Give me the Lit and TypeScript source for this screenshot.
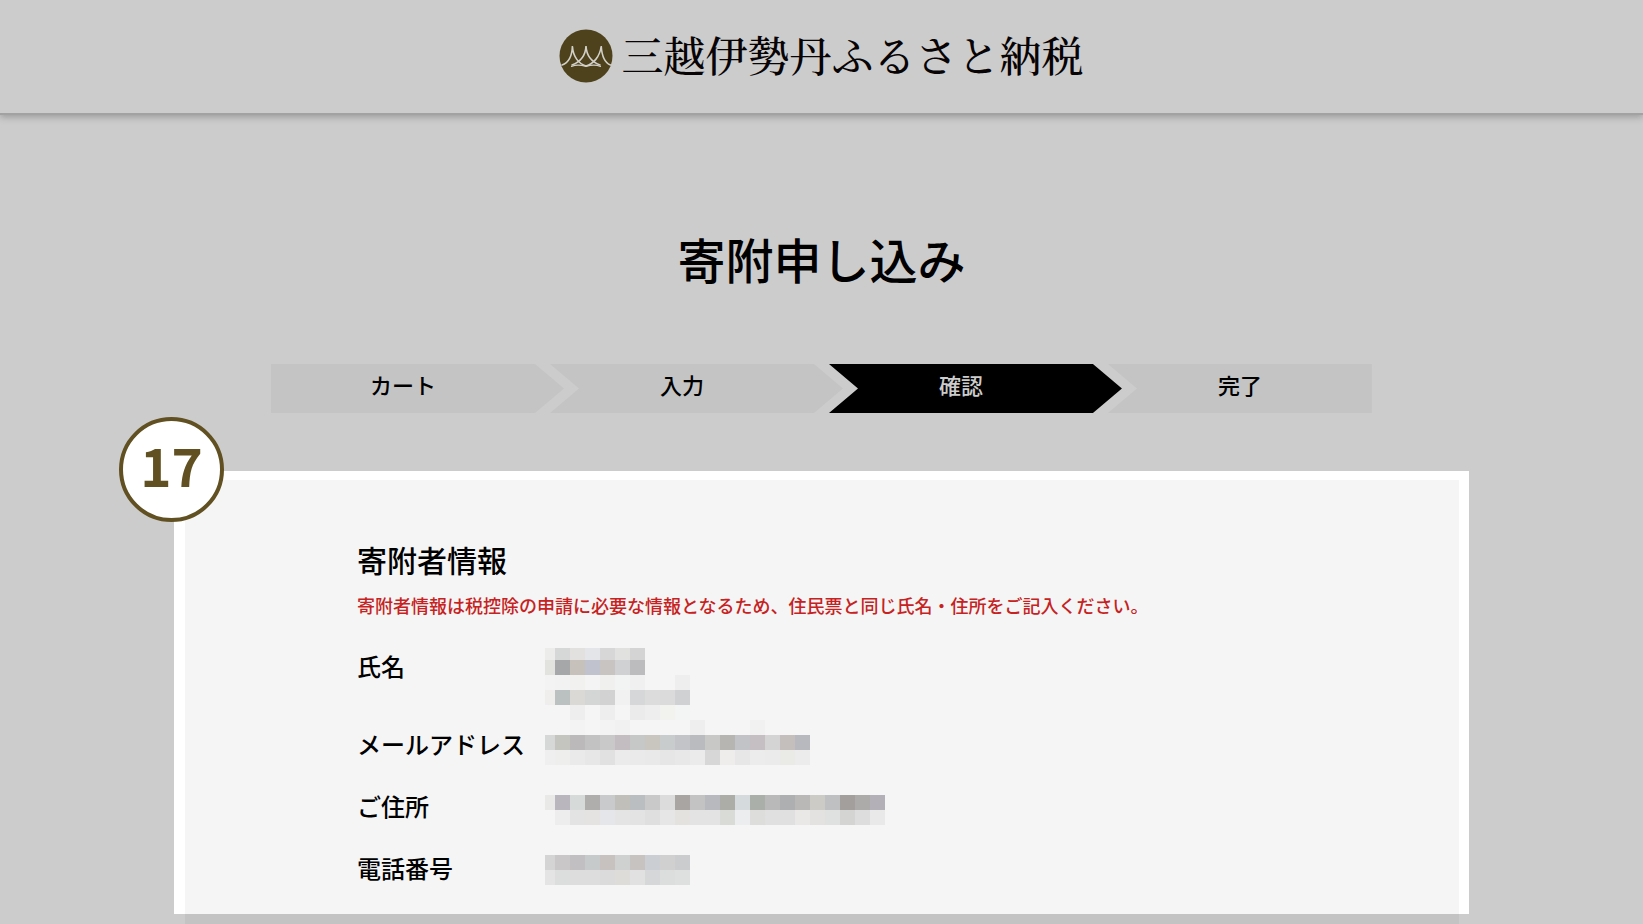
import { LitElement, html, svg, css } from "lit";
import { customElement } from "lit/decorators.js";
import { classMap } from "lit/directives/class-map.js";

const STEPS = ["カート", "入力", "確認", "完了"];
const CURRENT = 2;

const FIELDS = ["氏名", "メールアドレス", "ご住所", "電話番号"];

// Masked values: each band is one line of cells, "-" leaves a cell empty.
const BANDS: { y: number; h: number; cells: string }[] = [
  { y: 0, h: 12, cells: "ececea d6d7d7 e3e1df e3e5e8 d7d7d7 e1e1df d4d4d4" },
  { y: 12, h: 15, cells: "e2e2de a5a7a9 c6c2bb c0c3ce c7c4c1 cfd1d3 bcbcbe" },
  { y: 27, h: 15, cells: "f3f3f3 f2f2f2 f1f1f0 f4f4f4 f0f0ee f1f4f3 f0f0f0 - - eeeeee" },
  { y: 42, h: 15, cells: "efeeec bbc0c1 dbd9d6 d4d6d5 d2d2d2 f1f1f1 d5d7d9 dcdcdc dbdbdb cfd1d3" },
  { y: 57, h: 15, cells: "- - eeeeee - eeeeee - ebebeb eeeeee f2f2ef f2f5f4" },
  { y: 72, h: 15, cells: "- - f3f3f3 - f3f3f3 f1f1f1 - - - - eeeeee - - - f1f1f1" },
  { y: 87, h: 15, cells: "d5d8d7 c5c5bf bbb9b9 c2c2c2 c9c9c9 c3bdc1 c6c8c7 c9c5bf c8cccd c2c4c7 babbbe c8c8c6 b6b5b2 c1c3c7 c5bfc3 d4d4d4 c4bebc b8b9bf" },
  { y: 102, h: 15, cells: "efefef eeeeec eaeaea e7e7e7 e1e1e1 ebebeb eaeaea e9e9e9 e6e6e6 e8e8e8 ebebeb d7d7d7 eeedeb e7e7e7 ececec ebebeb eaeae7 ececec" },
  { y: 147, h: 15, cells: "e9e9e7 b9b7bd d6dad8 b0aeac c8cacc c0bfb9 bbbec0 c9c9c9 dcdcdc a9a5a2 c3c3c3 b7b9be acada6 d5dbdd aaafa9 b9b9b9 adafb1 b9b8b6 cccbc6 bec0c2 a39f9c acaba9 b3b1b7" },
  { y: 162, h: 15, cells: "- ededed e3e3e3 e4e3e1 e4e6e9 e4e4e4 e3e3e3 dfdfdf e6e6e6 e4e2df e3e3e3 e3e3e3 d9dbd7 ebedef dddddb e0e0e0 e0e0e0 e9e8e6 e4e2e0 dfe1e0 d4d4d2 dddddd e9e9e9" },
  { y: 207, h: 15, cells: "d4d4d4 cac7c8 c2bfc2 c6caca c7c2c0 ced1cf c6c3c0 cbcfd3 d0d0d0 cbccce" },
  { y: 222, h: 15, cells: "e4e4e4 dcdedd dddddd dddddd dbdbdb dedcd9 e1e1e1 d6d7d9 dcdedd dee0df" },
];

@customElement("brand-logo")
export class BrandLogo extends LitElement {
  static styles = css`
    :host {
      display: block;
    }
    .link {
      display: flex;
      align-items: center;
      gap: 8px;
      color: #080405;
      text-decoration: none;
    }
    .mark {
      display: block;
      width: 54px;
      height: 54px;
      flex: none;
    }
    .name {
      padding-bottom: 3px;
      font: 500 42px/53px "Noto Serif CJK JP", "Noto Serif JP", "Noto Sans CJK JP", serif;
      white-space: nowrap;
    }
  `;

  render() {
    return html`
      <a class="link" href="#">
        <svg class="mark" viewBox="0 0 54 54" aria-hidden="true">
          <circle cx="27" cy="27" r="26.5" fill="#4e421c" />
          <g fill="none" stroke="#d2d0c8" stroke-linecap="round">
            <path stroke-width="1.6" d="M3 36C9 34 13 29 13.4 17C14 28 20 35 27 37" />
            <path stroke-width="1.6" d="M13 36C21 33 26.5 28 27 17C27.5 28 33 33 41 36" />
            <path stroke-width="1.6" d="M27 37C34 35 41 28 42.2 17C43 29 46 34 51.5 36" />
            <path stroke-width="1.2" d="M12.5 37.5C17 35.5 22 36 27 37.3C32 36 37 35.5 41.5 37.5" />
          </g>
        </svg>
        <span class="name">三越伊勢丹ふるさと納税</span>
      </a>
    `;
  }
}

@customElement("step-bar")
export class StepBar extends LitElement {
  static styles = css`
    :host {
      display: block;
    }
    .steps {
      display: grid;
      grid-template-columns: repeat(4, 1fr);
      column-gap: 15px;
      margin: 0;
      padding: 0;
      list-style: none;
    }
    .step {
      margin-right: -29px;
      padding: 0 29px 8px 0;
      background: #c4c4c4;
      color: #000;
      font-size: 22px;
      line-height: 41px;
      font-weight: 500;
      text-align: center;
      clip-path: polygon(0 0, calc(100% - 29px) 0, 100% 50%, calc(100% - 29px) 100%, 0 100%, 29px 50%);
    }
    .step:first-child {
      clip-path: polygon(0 0, calc(100% - 29px) 0, 100% 50%, calc(100% - 29px) 100%, 0 100%);
    }
    .step:last-child {
      margin-right: 0;
      padding-right: 0;
      clip-path: polygon(0 0, 100% 0, 100% 100%, 0 100%, 29px 50%);
    }
    .current {
      background: #000;
      color: #ccc;
    }
  `;

  render() {
    return html`
      <ol class="steps">
        ${STEPS.map(
          (label, i) => html`<li
            class=${classMap({ step: true, current: i === CURRENT })}
            aria-current=${i === CURRENT ? "step" : "false"}
          >${label}</li>`
        )}
      </ol>
    `;
  }
}

@customElement("masked-values")
export class MaskedValues extends LitElement {
  static styles = css`
    :host {
      display: block;
    }
    .mosaic {
      display: block;
    }
  `;

  render() {
    return html`
      <svg class="mosaic" width="340" height="237" viewBox="0 0 340 237" shape-rendering="crispEdges" aria-hidden="true">
        ${BANDS.map((band) =>
          band.cells.split(" ").map((color, i) =>
            color === "-"
              ? null
              : svg`<rect x=${i === 0 ? 0 : 15 * i - 5} y=${band.y} width=${i === 0 ? 10 : 15} height=${band.h} fill=${"#" + color} />`
          )
        )}
      </svg>
    `;
  }
}

@customElement("app-root")
export class AppRoot extends LitElement {
  static styles = css`
    :host {
      display: flex;
      flex-direction: column;
      min-height: 100vh;
      background: #ccc;
      color: #000;
      font-family: "Noto Sans CJK JP", sans-serif;
      font-weight: 500;
    }
    .header {
      display: flex;
      justify-content: center;
      padding: 28px 0 29px;
      border-bottom: 2px solid #a2a2a2;
      box-shadow: 0 2px 7px rgba(0, 0, 0, 0.25);
    }
    .title {
      margin: 108px 0 71px;
      font-size: 48px;
      line-height: 70px;
      font-weight: 500;
      text-align: center;
    }
    .progress {
      width: 67%;
      margin: 0 auto;
    }
    .main {
      flex: 1;
      display: flex;
      flex-direction: column;
      margin: 58px 174px 0;
    }
    .card {
      position: relative;
      padding: 57px 172px 28px;
      border: 11px solid #fff;
      border-width: 9px 10px 0 11px;
      background: #f5f5f5;
    }
    .badge {
      position: absolute;
      top: -63px;
      left: -66px;
      box-sizing: border-box;
      width: 105px;
      height: 105px;
      border: 4px solid #615021;
      border-radius: 50%;
      background: #fff;
      color: #615021;
      font-size: 53px;
      line-height: 86px;
      text-align: center;
      font-weight: 700;
    }
    .heading {
      margin: 0;
      font-size: 30px;
      line-height: 44px;
      font-weight: 500;
    }
    .note {
      margin: 11px 0 29px;
      color: #c62222;
      font-size: 18px;
      line-height: 27px;
    }
    .info {
      display: flex;
      align-items: flex-start;
    }
    .labels {
      display: grid;
      row-gap: 26px;
      width: 188px;
      margin: 0;
      padding: 0;
      list-style: none;
      font-size: 24px;
      line-height: 36px;
    }
    .label:first-child {
      padding-bottom: 16px;
    }
    .rest {
      flex: 1;
      min-height: 10px;
      margin: 0 10px 0 11px;
      background: #c3c3c3;
    }
  `;

  render() {
    return html`
      <header class="header"><brand-logo></brand-logo></header>
      <h1 class="title">寄附申し込み</h1>
      <step-bar class="progress"></step-bar>
      <main class="main">
        <section class="card">
          <div class="badge">17</div>
          <h2 class="heading">寄附者情報</h2>
          <p class="note">寄附者情報は税控除の申請に必要な情報となるため、住民票と同じ氏名・住所をご記入ください。</p>
          <div class="info">
            <ul class="labels">
              ${FIELDS.map((label) => html`<li class="label">${label}</li>`)}
            </ul>
            <masked-values></masked-values>
          </div>
        </section>
        <div class="rest"></div>
      </main>
    `;
  }
}
